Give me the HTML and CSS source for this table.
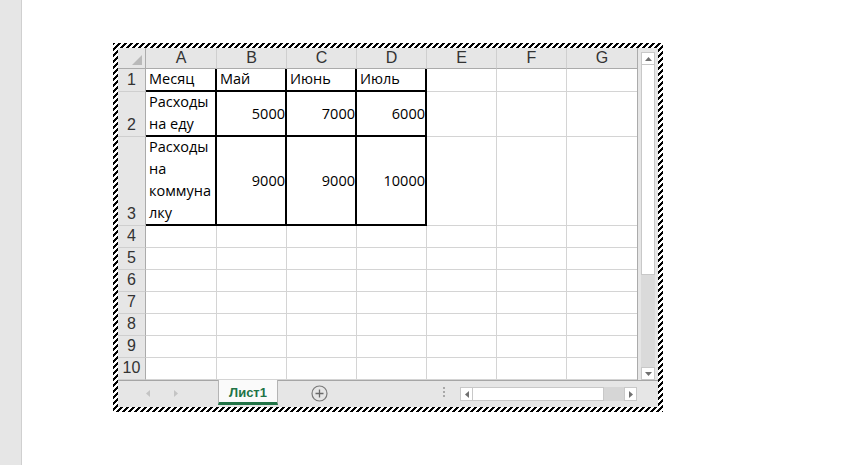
FILE: index.html
```html
<!DOCTYPE html>
<html>
<head>
<meta charset="utf-8">
<link rel="stylesheet" href="styles.css">
</head>
<body>
<div class="page">
  <div class="side"></div>
  <div class="main">
    <div class="obj">
      <div class="inner">
        <div class="top">
          <div class="sheet">
            <div class="corner"><span class="tri"></span></div>
            <div class="ch">A</div><div class="ch">B</div><div class="ch">C</div><div class="ch">D</div><div class="ch">E</div><div class="ch">F</div><div class="ch">G</div>

            <div class="rh">1</div>
            <div class="c t bd">Месяц</div><div class="c t bd">Май</div><div class="c t bd">Июнь</div><div class="c t bd">Июль</div><div class="c"></div><div class="c"></div><div class="c"></div>

            <div class="rh">2</div>
            <div class="c t bd">Расходы<br>на еду</div><div class="c n bd">5000</div><div class="c n bd">7000</div><div class="c n bd">6000</div><div class="c"></div><div class="c"></div><div class="c"></div>

            <div class="rh">3</div>
            <div class="c t bd">Расходы<br>на<br>коммуна<br>лку</div><div class="c n bd">9000</div><div class="c n bd">9000</div><div class="c n bd">10000</div><div class="c"></div><div class="c"></div><div class="c"></div>

            <div class="rh">4</div><div class="c"></div><div class="c"></div><div class="c"></div><div class="c"></div><div class="c"></div><div class="c"></div><div class="c"></div>
            <div class="rh">5</div><div class="c"></div><div class="c"></div><div class="c"></div><div class="c"></div><div class="c"></div><div class="c"></div><div class="c"></div>
            <div class="rh">6</div><div class="c"></div><div class="c"></div><div class="c"></div><div class="c"></div><div class="c"></div><div class="c"></div><div class="c"></div>
            <div class="rh">7</div><div class="c"></div><div class="c"></div><div class="c"></div><div class="c"></div><div class="c"></div><div class="c"></div><div class="c"></div>
            <div class="rh">8</div><div class="c"></div><div class="c"></div><div class="c"></div><div class="c"></div><div class="c"></div><div class="c"></div><div class="c"></div>
            <div class="rh">9</div><div class="c"></div><div class="c"></div><div class="c"></div><div class="c"></div><div class="c"></div><div class="c"></div><div class="c"></div>
            <div class="rh">10</div><div class="c"></div><div class="c"></div><div class="c"></div><div class="c"></div><div class="c"></div><div class="c"></div><div class="c"></div>
          </div>
          <div class="vscroll">
            <div class="abtn"><svg width="7" height="4" viewBox="0 0 7 4"><path d="M0 4 L3.5 0 L7 4 Z" fill="#707070"/></svg></div>
            <div class="vthumb"></div>
            <div class="vtrack"></div>
            <div class="abtn"><svg width="7" height="4" viewBox="0 0 7 4"><path d="M0 0 L7 0 L3.5 4 Z" fill="#707070"/></svg></div>
          </div>
        </div>
        <div class="tabbar">
          <div class="nav">
            <svg width="4" height="7" viewBox="0 0 4 7"><path d="M4 0 L0 3.5 L4 7 Z" fill="#c4c4c4"/></svg>
            <svg width="4" height="7" viewBox="0 0 4 7"><path d="M0 0 L4 3.5 L0 7 Z" fill="#c4c4c4"/></svg>
          </div>
          <div class="tab">Лист1</div>
          <div class="addwrap">
            <svg width="17" height="17" viewBox="0 0 17 17"><circle cx="8.5" cy="8.5" r="7.5" fill="none" stroke="#7a7a7a" stroke-width="1.2"/><path d="M8.5 4.5 V12.5 M4.5 8.5 H12.5" stroke="#6a6a6a" stroke-width="1.3"/></svg>
          </div>
          <div class="dots"><i></i><i></i><i></i></div>
          <div class="hscroll">
            <div class="hbtn"><svg width="4" height="7" viewBox="0 0 4 7"><path d="M4 0 L0 3.5 L4 7 Z" fill="#707070"/></svg></div>
            <div class="hthumb"></div>
            <div class="htrack"></div>
            <div class="hbtn"><svg width="4" height="7" viewBox="0 0 4 7"><path d="M0 0 L4 3.5 L0 7 Z" fill="#707070"/></svg></div>
          </div>
        </div>
      </div>
    </div>
  </div>
</div>
</body>
</html>
```

FILE: styles.css
```css
* { box-sizing: border-box; }
html, body { margin: 0; padding: 0; background: #fff; }
body { width: 867px; height: 465px; overflow: hidden; font-family: "Open Sans", sans-serif; }

.page { display: flex; height: 465px; }
.side { width: 22px; flex: none; background: #e6e6e6; border-right: 1px solid #d0d0d0; }
.main { flex: 1; }

.obj {
  margin: 43px 0 0 91px;
  width: 550px;
  height: 369px;
  padding: 5px;
  background-image: linear-gradient(135deg, #000 25%, #fff 25% 50%, #000 50% 75%, #fff 75%);
  background-size: 6px 6px;
}
.inner { width: 540px; height: 359px; background: #fff; display: flex; flex-direction: column; }
.top { display: flex; height: 332px; }

.sheet {
  display: grid;
  grid-template-columns: 28px 71px repeat(6, 70px);
  grid-template-rows: 21px 23px 45px 89px repeat(7, 22px);
  width: 519px;
}
.corner { background: #e6e6e6; border-right: 1px solid #ababab; border-bottom: 1px solid #ababab; position: relative; }
.tri {
  position: absolute; right: 3px; bottom: 3px;
  width: 0; height: 0;
  border-left: 10px solid transparent;
  border-bottom: 10px solid #b9b9b9;
}
.ch {
  background: #e6e6e6;
  border-right: 1px solid #cfcfcf;
  border-bottom: 1px solid #ababab;
  display: flex; align-items: center; justify-content: center;
  font-family: "Liberation Sans", Arial, sans-serif; font-size: 16px; color: #333;
}
.rh {
  background: #e6e6e6;
  border-right: 1px solid #ababab;
  border-bottom: 1px solid #cfcfcf;
  display: flex; align-items: flex-end; justify-content: center;
  font-family: "Liberation Sans", Arial, sans-serif; font-size: 16px; color: #333;
  line-height: 22px;
}
.c {
  border-right: 1px solid #d4d4d4;
  border-bottom: 1px solid #d4d4d4;
  font-size: 14.5px; color: #000;
  line-height: 22px;
}
.sheet > :nth-child(8n) { border-right: none; }
.t { display: flex; align-items: flex-end; padding-left: 3px; }
.n { display: flex; align-items: center; justify-content: flex-end; padding-right: 0; }
.c.bd { border-right: 2px solid #000; border-bottom: 2px solid #000; }

.vscroll {
  width: 21px; background: #e6e6e6; border-left: 1px solid #ababab;
  display: flex; flex-direction: column; align-items: center; padding: 4px 0 0 0;
}
.abtn {
  width: 14px; height: 13px; background: #fff; border: 1px solid #c8c8c8;
  display: flex; align-items: center; justify-content: center; flex: none;
}
.vthumb { width: 14px; height: 210px; background: #fff; border: 1px solid #c8c8c8; border-top: none; flex: none; }
.vtrack { width: 14px; flex: 1; background: #dadada; }

.tabbar {
  height: 27px; background: #e6e6e6; border-top: 1px solid #a6a6a6;
  display: flex; align-items: flex-start; position: relative;
}
.nav { width: 100px; display: flex; gap: 24px; padding: 9px 0 0 28px; }
.tab {
  width: 60px; height: 25px; margin-top: -1px;
  background: #fafafa; border-left: 1px solid #b4b4b4; border-right: 1px solid #b4b4b4;
  border-bottom: 3px solid #217346;
  color: #217346; font-family: "Liberation Sans", Arial, sans-serif; font-weight: bold; font-size: 13px;
  display: flex; align-items: center; justify-content: center; padding-top: 2px;
}
.addwrap { padding: 4px 0 0 33px; width: 75px; }
.dots { display: flex; flex-direction: column; gap: 2px; padding: 6px 0 0 0; margin-left: 90px; width: 2px; }
.dots i { display: block; width: 2px; height: 2px; background: #a8a8a8; }
.hscroll { display: flex; margin: 6px 0 0 15px; height: 14px; }
.hbtn { width: 13px; height: 14px; background: #fff; border: 1px solid #c8c8c8; display: flex; align-items: center; justify-content: center; }
.hthumb { width: 131px; background: #fff; border: 1px solid #c8c8c8; border-left: none; }
.htrack { width: 20px; background: #d6d6d6; }
```
